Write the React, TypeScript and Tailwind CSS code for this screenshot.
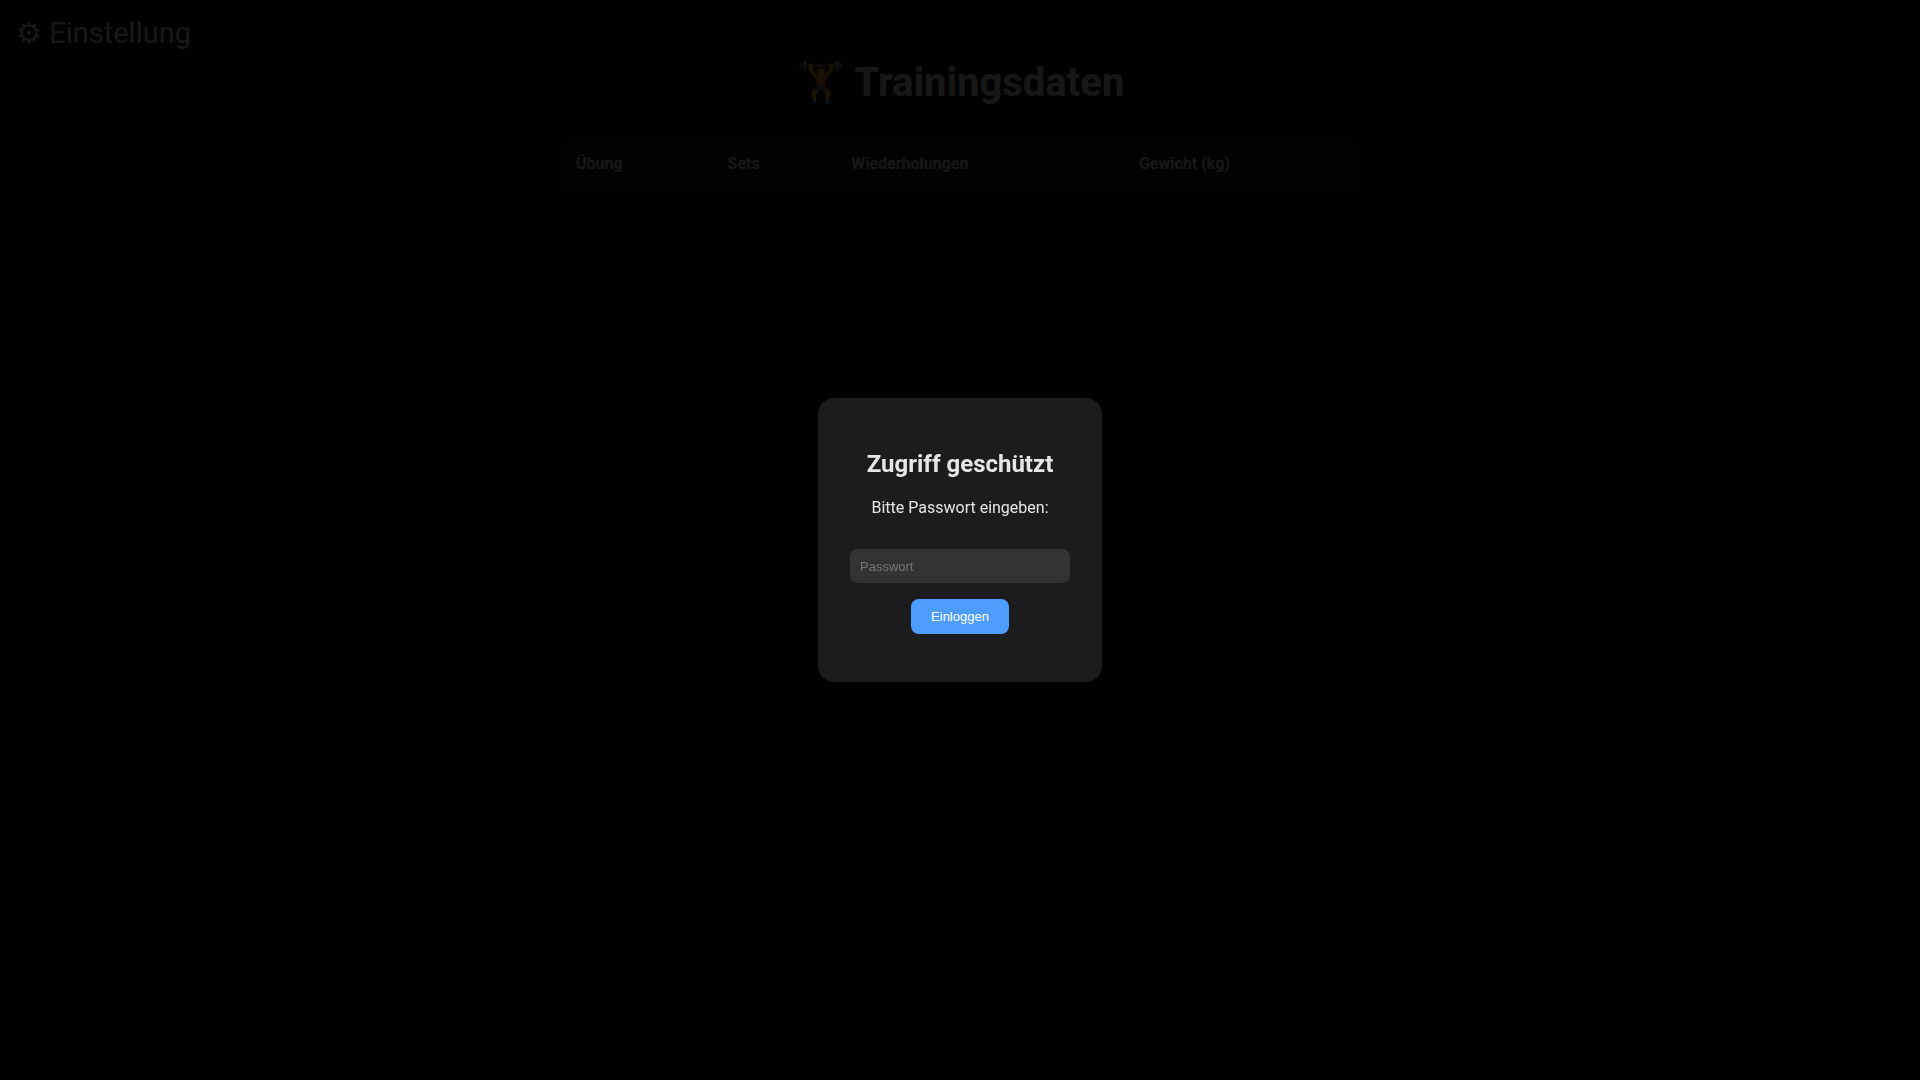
import { useState } from "react"
import type { FormEvent } from "react"

interface TrainingEntry {
  exercise: string
  sets: number
  reps: number
  weight: number
}

const columns = ["Übung", "Sets", "Wiederholungen", "Gewicht (kg)"]

function TrainingTable({ entries }: { entries: TrainingEntry[] }) {
  return (
    <table className="w-full max-w-[800px] mx-auto border-separate border-spacing-0 rounded-xl overflow-hidden bg-[#1c1c1e] text-left">
      <thead>
        <tr>
          {columns.map((column) => (
            <th key={column} scope="col" className="p-4 font-bold leading-[19px] border-b border-[#333333]">
              {column}
            </th>
          ))}
        </tr>
      </thead>
      <tbody>
        {entries.map((entry) => (
          <tr key={entry.exercise}>
            <td className="p-4">{entry.exercise}</td>
            <td className="p-4">{entry.sets}</td>
            <td className="p-4">{entry.reps}</td>
            <td className="p-4">{entry.weight}</td>
          </tr>
        ))}
      </tbody>
    </table>
  )
}

function LoginOverlay({ onLogin }: { onLogin: (password: string) => void }) {
  const [password, setPassword] = useState("")

  const handleSubmit = (e: FormEvent) => {
    e.preventDefault()
    onLogin(password)
  }

  return (
    <div className="fixed inset-0 flex items-center justify-center bg-black/90">
      <form
        onSubmit={handleSubmit}
        role="dialog"
        aria-labelledby="login-title"
        className="flex flex-col items-center px-8 py-12 rounded-2xl bg-[#1c1c1e] text-center shadow-[0_8px_24px_rgba(0,0,0,0.5)]"
      >
        <h2 id="login-title" className="mt-1 mb-5 text-2xl leading-7 font-bold">Zugriff geschützt</h2>
        <label htmlFor="password" className="mb-8 leading-[19px]">Bitte Passwort eingeben:</label>
        <input
          id="password"
          type="password"
          placeholder="Passwort"
          value={password}
          onChange={(e) => setPassword(e.target.value)}
          className="w-[220px] h-[34px] mb-4 px-[10px] rounded-lg bg-[#333333] font-['Liberation_Sans',sans-serif] text-[13px] placeholder:text-[#757575] outline-none"
        />
        <button
          type="submit"
          className="h-[35px] px-5 rounded-lg bg-[#4d9dff] text-white font-['Liberation_Sans',sans-serif] text-[13px] cursor-pointer"
        >
          Einloggen
        </button>
      </form>
    </div>
  )
}

export default function App() {
  const [entries] = useState<TrainingEntry[]>([])
  const [loggedIn, setLoggedIn] = useState(false)

  return (
    <div className="min-h-screen bg-[#0d0d0d] text-[#e6e6e6] font-[Roboto,sans-serif]">
      <header className="px-4 pt-4">
        <button type="button" className="block text-[29px] leading-[34px] cursor-pointer">⚙ Einstellung</button>
      </header>
      <main className="px-4 pt-2">
        <h1 className="mb-[30px] text-center text-[40px] leading-[50px] font-bold">🏋️ Trainingsdaten</h1>
        <TrainingTable entries={entries} />
      </main>
      {!loggedIn && <LoginOverlay onLogin={(password) => setLoggedIn(password !== "")} />}
    </div>
  )
}
